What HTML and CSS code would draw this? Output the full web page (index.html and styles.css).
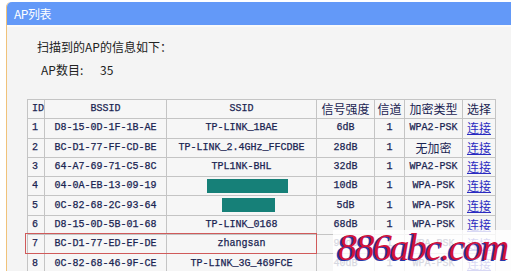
FILE: index.html
```html
<!DOCTYPE html>
<html lang="zh">
<head>
<meta charset="utf-8">
<link rel="stylesheet" href="styles.css">
</head>
<body>
<div class="panel">
  <div class="panel-head">AP列表</div>
  <div class="panel-body">
    <div class="intro">扫描到的AP的信息如下：</div>
    <div class="count"><span class="count-label">AP数目:</span><span class="count-num">35</span></div>
    <div class="table-wrap">
      <table class="ap-table">
        <colgroup>
          <col class="c-id"><col class="c-bssid"><col class="c-ssid"><col class="c-sig"><col class="c-ch"><col class="c-enc"><col class="c-sel">
        </colgroup>
        <thead>
          <tr><th class="left">ID</th><th>BSSID</th><th>SSID</th><th class="cjk">信号强度</th><th class="cjk">信道</th><th class="cjk">加密类型</th><th class="cjk">选择</th></tr>
        </thead>
        <tbody>
          <tr><td class="left">1</td><td>D8-15-0D-1F-1B-AE</td><td>TP-LINK_1BAE</td><td>6dB</td><td>1</td><td>WPA2-PSK</td><td class="cjk"><a href="#">连接</a></td></tr>
          <tr><td class="left">2</td><td>BC-D1-77-FF-CD-BE</td><td>TP-LINK_2.4GHz_FFCDBE</td><td>28dB</td><td>1</td><td class="cjk">无加密</td><td class="cjk"><a href="#">连接</a></td></tr>
          <tr><td class="left">3</td><td>64-A7-69-71-C5-8C</td><td>TPL1NK-BHL</td><td>32dB</td><td>1</td><td>WPA2-PSK</td><td class="cjk"><a href="#">连接</a></td></tr>
          <tr><td class="left">4</td><td>04-0A-EB-13-09-19</td><td><span class="mask mask-wide"></span></td><td>10dB</td><td>1</td><td>WPA-PSK</td><td class="cjk"><a href="#">连接</a></td></tr>
          <tr><td class="left">5</td><td>0C-82-68-2C-93-64</td><td><span class="mask mask-narrow"></span></td><td>5dB</td><td>1</td><td>WPA-PSK</td><td class="cjk"><a href="#">连接</a></td></tr>
          <tr><td class="left">6</td><td>D8-15-0D-5B-01-68</td><td>TP-LINK_0168</td><td>68dB</td><td>1</td><td>WPA-PSK</td><td class="cjk"><a href="#">连接</a></td></tr>
          <tr><td class="left">7</td><td>BC-D1-77-ED-EF-DE</td><td>zhangsan</td><td>90dB</td><td>1</td><td>WPA-PSK</td><td class="cjk"><a href="#">连接</a></td></tr>
          <tr><td class="left">8</td><td>0C-82-68-46-9F-CE</td><td>TP-LINK_3G_469FCE</td><td>40dB</td><td>1</td><td>WPA-PSK</td><td class="cjk"><a href="#">连接</a></td></tr>
        </tbody>
      </table>
      <div class="highlight"></div>
    </div>
  </div>
</div>
<div class="watermark"><span class="wm-text">886abc.com</span></div>
</body>
</html>
```

FILE: styles.css
```css
html, body {
  margin: 0;
  padding: 0;
  background: #ffffff;
  overflow: hidden;
}
body {
  width: 511px;
  height: 271px;
  position: relative;
  font-family: "Noto Sans CJK SC", "Liberation Sans", sans-serif;
}
.panel {
  margin: 2px 0 0 6px;
  border-left: 1px solid #f0c27a;
  border-top-left-radius: 5px;
  background: #f4f4f4;
  height: 269px;
}
.panel-head {
  height: 23px;
  background: #6399f8;
  border-top-left-radius: 5px;
  border-bottom: 2px solid #fafafa;
  color: #ffffff;
  font-size: 12px;
  line-height: 23px;
  padding-left: 7px;
  letter-spacing: -0.5px;
}
.panel-body {
  padding: 11px 0 0 20px;
}
.intro {
  font-size: 12px;
  line-height: 18px;
  color: #222222;
  padding-left: 10px;
}
.count {
  font-size: 12px;
  line-height: 18px;
  color: #222222;
  padding: 5px 0 0 14px;
  display: flex;
}
.count-label {
  width: 59px;
}
.table-wrap {
  position: relative;
  margin-top: 20px;
  width: 468px;
}
.ap-table {
  border-collapse: collapse;
  table-layout: fixed;
  width: 468px;
  font-family: "Liberation Mono", "DejaVu Sans Mono", monospace;
  font-size: 10px;
  color: #1a2452;
  font-weight: normal;
}
.c-id { width: 17px; }
.c-bssid { width: 122px; }
.c-ssid { width: 150px; }
.c-sig { width: 58px; }
.c-ch { width: 30px; }
.c-enc { width: 58px; }
.c-sel { width: 33px; }
.ap-table tr {
  height: 19.3px;
}
.ap-table th, .ap-table td {
  border: 1px solid #c4c4c4;
  padding: 0;
  line-height: 14px;
  text-align: center;
  white-space: nowrap;
  overflow: hidden;
  background: #f6f6f6;
  -webkit-text-stroke: 0.25px #1a2452;
}
.ap-table th {
  font-weight: normal;
}
.ap-table .left {
  text-align: left;
  padding-left: 4px;
}
.ap-table .cjk {
  font-family: "Noto Sans CJK SC", sans-serif;
  font-size: 12px;
  line-height: 14px;
  -webkit-text-stroke: 0;
}
.ap-table a {
  color: #2a2ac0;
  text-decoration: underline;
}
.mask {
  display: inline-block;
  height: 14px;
  background: #168078;
  vertical-align: middle;
}
.mask-wide { width: 81px; margin-left: 12px; }
.mask-narrow { width: 53px; margin-left: 13px; }
.highlight {
  position: absolute;
  left: -2px;
  top: 134px;
  width: 290px;
  height: 19px;
  border: 1px solid #d05a5a;
  pointer-events: none;
}
.watermark {
  position: absolute;
  left: 333px;
  top: 230px;
  width: 178px;
  height: 41px;
  background: rgba(255, 255, 255, 0.82);
}
.wm-text {
  position: absolute;
  left: 5px;
  top: -5px;
  font-family: "Liberation Serif", serif;
  font-style: italic;
  font-size: 38px;
  letter-spacing: -1.5px;
  color: #d2123c;
  text-shadow: -2px 1px 0 #2a36a8;
  white-space: nowrap;
}
```
